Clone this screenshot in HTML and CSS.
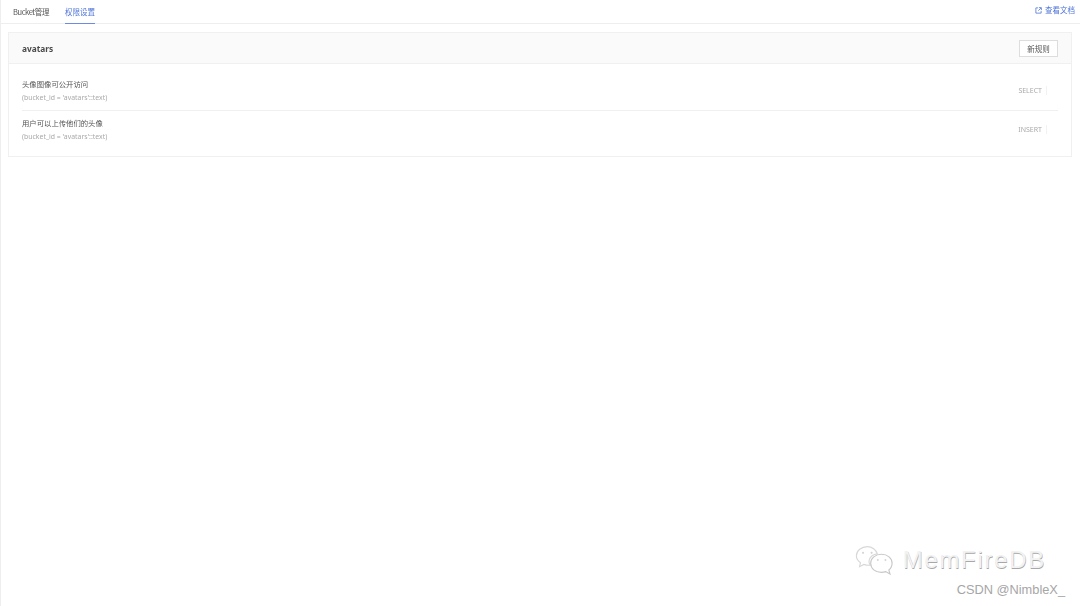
FILE: index.html
```html
<!DOCTYPE html>
<html lang="zh-CN">
<head>
    <meta charset="UTF-8">
    <meta name="viewport" content="width=device-width, initial-scale=1.0">
    <title>权限设置</title>
    <link rel="stylesheet" href="styles.css">
</head>
<body>
    <div class="tabs">
        <a class="tab tab-first">Bucket管理</a>
        <a class="tab active">权限设置</a>
        <a class="docs">
            <svg class="docs-icon" viewBox="0 0 8 8" width="7" height="7" aria-hidden="true">
                <path d="M3.500 1H1v6h6V4.500M4.500 .7h2.800v2.800M6.800 1.200L3.800 4.200" fill="none" stroke="currentColor" stroke-width="0.9"/>
            </svg>
            <span class="docs-label">查看文档</span>
        </a>
    </div>

    <div class="card">
        <div class="card-head">
            <span class="bucket-name">avatars</span>
            <button class="btn">新规则</button>
        </div>
        <div class="rules">
            <div class="rule">
                <div class="rule-text">
                    <div class="rule-name">头像图像可公开访问</div>
                    <div class="rule-expr">(bucket_id = 'avatars'::text)</div>
                </div>
                <div class="rule-op">SELECT</div>
            </div>
            <div class="rule">
                <div class="rule-text">
                    <div class="rule-name">用户可以上传他们的头像</div>
                    <div class="rule-expr">(bucket_id = 'avatars'::text)</div>
                </div>
                <div class="rule-op">INSERT</div>
            </div>
        </div>
    </div>

    <div class="watermark">
        <div class="wm-brand">
            <svg class="wm-logo" viewBox="0 0 42 32" width="40" height="32" aria-hidden="true">
                <path d="M17 21.500C16 20 15.600 18.500 15.800 17C16.300 12.800 20 9.800 24.500 9.600C23.300 5.200 19 2 14 2C7.800 2 2.500 6.200 2.500 11.500C2.500 14.500 4.200 17 6.800 18.800L5.800 23L10.300 20.600C12.400 21.400 14.700 21.700 17 21.500Z" fill="#fff" stroke="#d8d8d8" stroke-width="1.200"/>
                <path d="M40 19.500C40 14 35.200 10 28.800 10C22.400 10 17.500 14 17.500 19.500C17.500 25 22.400 29 28.800 29C30.400 29 31.900 28.700 33.300 28.200L37.800 30.800L36.600 26.500C38.800 24.800 40 22.400 40 19.500Z" fill="#fff" stroke="#c8c8c8" stroke-width="1.200"/>
                <circle cx="9.500" cy="8.500" r="1.100" fill="#d4d4d4"/>
                <circle cx="18.500" cy="8.500" r="1.100" fill="#d4d4d4"/>
                <circle cx="25" cy="16" r="1" fill="#d4d4d4"/>
                <circle cx="33" cy="16" r="1" fill="#d4d4d4"/>
            </svg>
            <span class="wm-name">MemFireDB</span>
        </div>
        <div class="wm-credit">CSDN @NimbleX_</div>
    </div>
</body>
</html>
```
FILE: styles.css
```css
* {
    box-sizing: border-box;
}
html, body {
    height: 100%;
}
body {
    margin: 0;
    background: #fff;
    border-left: 1px solid #eeeeee;
    font-family: "Noto Sans CJK SC", "Noto Sans", sans-serif;
    color: #333;
    overflow: hidden;
}
.tabs {
    display: flex;
    align-items: flex-start;
    height: 24px;
    padding: 0 5px 0 12px;
    border-bottom: 1px solid #eeeeee;
    font-size: 7.500px;
}
.tab {
    height: 24px;
    margin-right: 16px;
    padding-top: 6px;
    line-height: 12px;
    color: #555;
}
.tab-first {
    letter-spacing: -0.400px;
}
.tab.active {
    color: #4f74d8;
    border-bottom: 1px solid #6d8be6;
}
.docs {
    display: flex;
    align-items: center;
    gap: 3px;
    margin-left: auto;
    padding-top: 4px;
    line-height: 12px;
    color: #4f74d8;
}
.card {
    margin: 8px 8px 0 7px;
    border: 1px solid #f0f0f0;
}
.card-head {
    display: flex;
    align-items: center;
    justify-content: space-between;
    height: 31px;
    padding: 0 13px;
    background: #fafafa;
    border-bottom: 1px solid #f0f0f0;
}
.bucket-name {
    font-family: "Noto Sans", sans-serif;
    font-size: 8.300px;
    font-weight: 700;
    color: #4a4a4a;
}
.btn {
    width: 39px;
    height: 17px;
    padding: 0;
    background: #fff;
    border: 1px solid #dddddd;
    font-family: inherit;
    font-size: 7.500px;
    color: #555;
}
.rules {
    padding: 8px 13px 7px;
}
.rule {
    display: flex;
    align-items: center;
    justify-content: space-between;
    height: 38px;
    padding-right: 11px;
    padding-bottom: 2px;
}
.rule:first-child {
    height: 39px;
    border-bottom: 1px solid #f0f0f0;
}
.rule-name {
    font-size: 7.350px;
    line-height: 12px;
    color: #555;
}
.rule-expr {
    margin-top: 2px;
    font-family: "Noto Sans", sans-serif;
    font-size: 6.900px;
    line-height: 11px;
    color: #aaaaaa;
}
.rule-op {
    padding-right: 4px;
    border-right: 1px solid #f2f2f2;
    font-family: "Noto Sans", sans-serif;
    font-size: 7px;
    line-height: 9px;
    color: #aaaaaa;
}
.tab, .docs-label, .bucket-name, .btn, .rule-name, .rule-expr, .rule-op {
    filter: blur(0.3px);
}
.watermark {
    position: absolute;
    right: 15px;
    bottom: 8px;
    display: flex;
    flex-direction: column;
    align-items: flex-end;
}
.wm-brand {
    display: flex;
    align-items: center;
    gap: 9px;
    margin-right: 19px;
}
.wm-name {
    font-family: "Liberation Sans", sans-serif;
    font-size: 24px;
    line-height: 32px;
    letter-spacing: 1.700px;
    color: #f2f2f2;
    text-shadow: 0.500px 1px 0 #a8a8a8;
}
.wm-credit {
    margin-top: 6px;
    font-family: "Liberation Sans", sans-serif;
    font-size: 12.800px;
    line-height: 16px;
    color: #a6a6a6;
}
```
